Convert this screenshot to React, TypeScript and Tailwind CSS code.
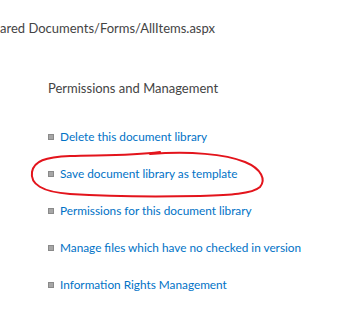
export default function App() {
  const links = [
    'Delete this document library',
    'Save document library as template',
    'Permissions for this document library',
    'Manage files which have no checked in version',
    'Information Rights Management',
  ]

  return (
    <div className="relative w-[349px] h-[314px] bg-white overflow-hidden font-['Segoe_UI','Lato',sans-serif]">
      {/* URL line, clipped at the left edge */}
      <div className="pt-[19px] text-[13px] leading-[18px] text-[#444444] whitespace-nowrap">
        ared Documents/Forms/AllItems.aspx
      </div>

      <div className="pl-[48px] pt-[42px]">
        <h2 className="text-[13px] leading-[18px] text-[#444444]">Permissions and Management</h2>

        <ul className="mt-[31px] flex flex-col gap-[19px]">
          {links.map((label) => (
            <li key={label} className="flex items-center gap-[6px] h-[18px]">
              <span className="w-[6px] h-[6px] bg-[#a6a6a6] border border-[#8a8a8a] shrink-0" />
              <a href="#" className="text-[11.8px] leading-[18px] text-[#0072c6] whitespace-nowrap">
                {label}
              </a>
            </li>
          ))}
        </ul>
      </div>

      {/* hand-drawn red circle around the second link */}
      <svg className="absolute left-0 top-0 pointer-events-none" width="349" height="314" viewBox="0 0 349 314">
        <path
          d="M150 154 C190 151 225 154 245 162 C262 169 266 180 260 187 C252 194 230 195 200 196 C150 197 100 196 70 194 C42 192 30 184 32 172 C34 161 45 157 70 156 C100 155 130 156 160 152"
          fill="none"
          stroke="#e3141c"
          strokeWidth="2"
          strokeLinecap="round"
        />
      </svg>
    </div>
  )
}
